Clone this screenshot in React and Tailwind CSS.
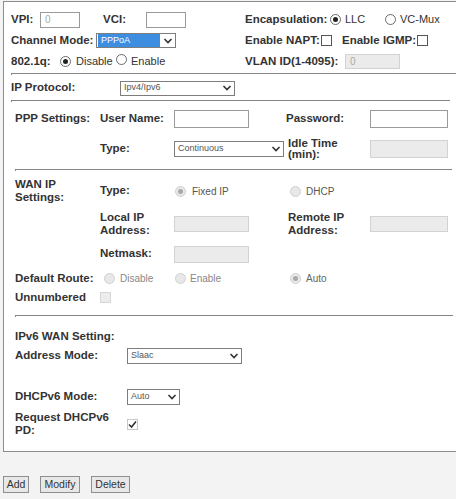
import React from 'react';

const Radio = ({ checked, disabled }) => (
  <span
    className={`inline-flex h-[11px] w-[11px] shrink-0 items-center justify-center rounded-full border ${
      disabled ? 'border-[#d0d0d0] bg-[#e8e8e8]' : 'border-[#6b6b6b] bg-white'
    }`}
  >
    {checked && (
      <span className={`h-[5px] w-[5px] rounded-full ${disabled ? 'bg-[#a9a9a9]' : 'bg-[#222]'}`} />
    )}
  </span>
);

const Check = ({ checked, disabled }) => (
  <span
    className={`inline-flex h-[11px] w-[11px] shrink-0 items-center justify-center border ${
      disabled ? 'border-[#d6d6d6] bg-[#ececec]' : checked ? 'border-[#c8c8c8] bg-white' : 'border-[#555] bg-white'
    }`}
  >
    {checked && (
      <svg width="9" height="9" viewBox="0 0 9 9">
        <path d="M1 4.5 L3.5 7 L8 1.5" fill="none" stroke="#333" strokeWidth="1.6" />
      </svg>
    )}
  </span>
);

const Field = ({ className = '', value, disabled }) => (
  <span
    className={`flex items-center border pl-[4px] text-[10px] text-[#aaa] ${
      disabled ? 'border-[#d2d2d2] bg-[#ebebeb]' : 'border-[#9a9a9a] bg-white'
    } ${className}`}
  >
    {value}
  </span>
);

const Select = ({ className = '', value, highlight }) => (
  <span className={`flex items-center border border-[#7d7d7d] bg-white ${className}`}>
    <span
      className={`flex h-full flex-1 items-center pl-[3px] text-[9px] ${
        highlight ? 'm-[1px] bg-[#3d8ee0] text-white' : 'text-[#555]'
      }`}
    >
      {value}
    </span>
    <svg width="14" height="10" viewBox="0 0 14 10" className="shrink-0">
      <path d="M3.5 3 L7 6.5 L10.5 3" fill="none" stroke="#333" strokeWidth="1.6" />
    </svg>
  </span>
);

const Hr = ({ className = '' }) => (
  <div className={`h-[2px] border-l border-t border-[#858585] ${className}`} />
);

const L = ({ className = '', children }) => <span className={`font-bold ${className}`}>{children}</span>;

export default function App() {
  return (
    <div className="h-[499px] w-[456px] overflow-hidden bg-[#f3f3f3] font-['Liberation_Sans',Arial,sans-serif] text-[11px] text-[#333]">
      <div className="ml-[3px] mt-[1px] h-[451px] border-b border-l border-t border-[#8c8c8c] bg-white text-[11.5px]">
        {/* top block */}
        <div className="pl-[7px] pt-[7px]">
          <div className="flex h-[21px] items-center">
            <div className="flex w-[234px] items-center">
              <L className="w-[29px]">VPI:</L>
              <Field className="h-[16px] w-[40px]" value="0" />
              <L className="ml-[23px] w-[43px]">VCI:</L>
              <Field className="h-[16px] w-[40px]" />
            </div>
            <L className="w-[85px]">Encapsulation:</L>
            <Radio checked />
            <span className="ml-[4px] w-[40px] text-[11px]">LLC</span>
            <Radio />
            <span className="ml-[4px] text-[11px]">VC-Mux</span>
          </div>
          <div className="flex h-[21px] items-center">
            <div className="flex w-[234px] items-center">
              <L className="w-[85px]">Channel Mode:</L>
              <Select className="h-[15px] w-[80px]" value="PPPoA" highlight />
            </div>
            <L className="w-[76px]">Enable NAPT:</L>
            <Check />
            <L className="ml-[10px] w-[75px]">Enable IGMP:</L>
            <Check />
          </div>
          <div className="flex h-[21px] items-center">
            <div className="flex w-[234px] items-center">
              <L className="w-[49px]">802.1q:</L>
              <Radio checked />
              <span className="ml-[5px] w-[35px] text-[11px]">Disable</span>
              <span className="ml-[5px]"><Radio /></span>
              <span className="ml-[4px] text-[11px]">Enable</span>
            </div>
            <L className="w-[100px]">VLAN ID(1-4095):</L>
            <Field className="h-[15px] w-[55px]" value="0" disabled />
          </div>
          <Hr className="mt-[1px]" />
          <div className="mt-[3px] flex h-[20px] items-center">
            <L className="w-[109px]">IP Protocol:</L>
            <Select className="h-[15px] w-[115px]" value="Ipv4/Ipv6" />
          </div>
          <Hr className="mr-[6px] mt-[2px]" />
        </div>

        {/* PPP / WAN block */}
        <div className="pl-[11px]">
          <div className="mt-[7px] grid h-[20px] grid-cols-[85px_74px_112px_84px_1fr] items-center">
            <L>PPP Settings:</L>
            <L>User Name:</L>
            <Field className="h-[18px] w-[75px]" />
            <L>Password:</L>
            <Field className="h-[18px] w-[78px]" />
          </div>
          <div className="mt-[9px] grid h-[22px] grid-cols-[85px_74px_112px_84px_1fr] items-center">
            <span />
            <L>Type:</L>
            <Select className="h-[16px] w-[110px]" value="Continuous" />
            <L className="pl-[2px] leading-[11px]">Idle Time<br />(min):</L>
            <Field className="h-[18px] w-[78px]" disabled />
          </div>
          <Hr className="mr-[4px] mt-[9px]" />
          <div className="mt-[7px] grid h-[26px] grid-cols-[85px_74px_114px_82px_1fr] items-center">
            <L className="leading-[13px]">WAN IP<br />Settings:</L>
            <L>Type:</L>
            <span className="flex items-center pl-[1px]">
              <Radio checked disabled />
              <span className="ml-[6px] text-[10px] text-[#555]">Fixed IP</span>
            </span>
            <span className="flex items-center pl-[2px]">
              <Radio disabled />
              <span className="ml-[5px] text-[10px] text-[#555]">DHCP</span>
            </span>
          </div>
          <div className="mt-[7px] grid h-[26px] grid-cols-[85px_74px_114px_82px_1fr] items-center">
            <span />
            <L className="leading-[13px]">Local IP<br />Address:</L>
            <Field className="h-[16px] w-[75px]" disabled />
            <L className="leading-[13px]">Remote IP<br />Address:</L>
            <Field className="h-[16px] w-[78px]" disabled />
          </div>
          <div className="mt-[8px] grid h-[18px] grid-cols-[85px_74px_114px_82px_1fr] items-center">
            <span />
            <L>Netmask:</L>
            <Field className="h-[17px] w-[75px]" disabled />
          </div>
          <div className="mt-[7px] grid h-[16px] grid-cols-[85px_74px_114px_82px_1fr] items-center">
            <L>Default Route:</L>
            <span className="flex items-center pl-[4px]">
              <Radio disabled />
              <span className="ml-[5px] text-[10px] text-[#888]">Disable</span>
            </span>
            <span className="flex items-center pl-[1px]">
              <Radio disabled />
              <span className="ml-[4px] text-[10px] text-[#888]">Enable</span>
            </span>
            <span className="flex items-center pl-[2px]">
              <Radio checked disabled />
              <span className="ml-[5px] text-[10px] text-[#666]">Auto</span>
            </span>
          </div>
          <div className="mt-[3px] grid h-[14px] grid-cols-[85px_1fr] items-center">
            <L>Unnumbered</L>
            <Check disabled />
          </div>
          <Hr className="mr-[3px] mt-[12px]" />

          {/* IPv6 block */}
          <div className="mt-[13px] flex h-[14px] items-center">
            <L>IPv6 WAN Setting:</L>
          </div>
          <div className="mt-[4px] flex h-[16px] items-center">
            <L className="w-[112px]">Address Mode:</L>
            <Select className="h-[16px] w-[115px]" value="Slaac" />
          </div>
          <div className="mt-[25px] flex h-[16px] items-center">
            <L className="w-[112px]">DHCPv6 Mode:</L>
            <Select className="h-[16px] w-[53px]" value="Auto" />
          </div>
          <div className="mt-[6px] flex h-[26px] items-center">
            <L className="w-[112px] leading-[13px]">Request DHCPv6<br />PD:</L>
            <Check checked />
          </div>
        </div>
      </div>

      <div className="ml-[3px] mt-[24px] flex items-center gap-[11px]">
        <button className="h-[17px] w-[26px] border border-[#8f8f8f] bg-[#e8e8e8] text-[10.5px] leading-none text-[#333]">Add</button>
        <button className="h-[17px] w-[40px] border border-[#8f8f8f] bg-[#e8e8e8] text-[10.5px] leading-none text-[#333]">Modify</button>
        <button className="h-[17px] w-[39px] border border-[#8f8f8f] bg-[#e8e8e8] text-[10.5px] leading-none text-[#333]">Delete</button>
      </div>
    </div>
  );
}
